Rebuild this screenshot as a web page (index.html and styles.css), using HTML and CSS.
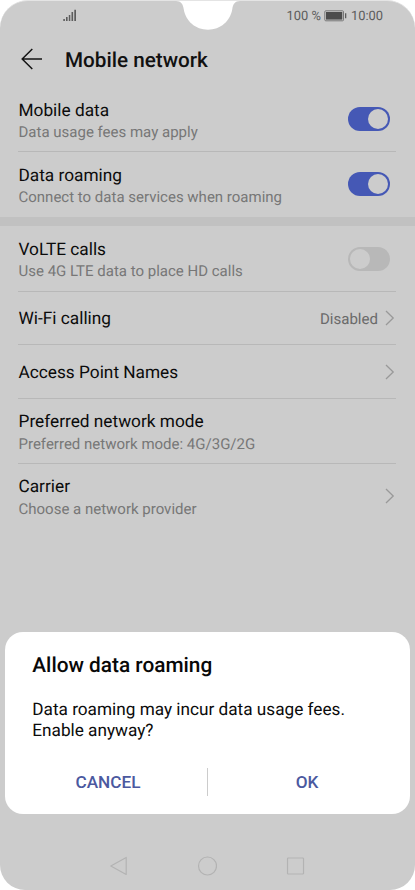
FILE: index.html
```html
<!DOCTYPE html>
<html lang="en">
<head>
<meta charset="utf-8">
<title>Mobile network</title>
<link rel="stylesheet" href="styles.css">
</head>
<body>
<main class="phone">
  <svg class="notch" width="72" height="31" viewBox="0 0 72 31"><path d="M4 0V1C9 1 11 4 11.700 9C13.500 21 23.500 29.700 36 29.700S58.500 21 60.300 9C61 4 63 1 68 1V0Z" fill="#fff"/></svg>
  <div class="status">
    <svg class="signal" width="14" height="13" viewBox="0 0 14 13" fill="#5c5c5c"><path d="M.3 10h1.600v2H.3zM3 8h1.600v4H3zM5.800 6h1.500v6H5.800zM8.500 3h1.600v9H8.500zM11.300.8H13V12h-1.700z"/></svg>
    <div class="power">
      <span class="percent">100 %</span>
      <svg class="battery" width="23" height="12" viewBox="0 0 23 12"><rect x=".8" y=".8" width="18.700" height="10" rx="1" fill="none" stroke="#777"/><rect x="2" y="2" width="16.300" height="7.600" fill="#4c4c4c"/><path d="M21 3.200h1.300v5H21z" fill="#5c5c5c"/></svg>
      <span class="clock">10:00</span>
    </div>
  </div>
  <header class="header">
    <svg class="back" width="23" height="24" viewBox="0 0 23 24" fill="none" stroke="#151515" stroke-width="1.500"><path d="M22 12H2M12.300 2 2.200 12l10.100 10"/></svg>
    <h1 class="heading">Mobile network</h1>
  </header>
  <section class="group first">
    <div class="row"><div class="label"><div class="title low">Mobile data</div><div class="sub">Data usage fees may apply</div></div><span class="toggle on"></span></div>
    <div class="row"><div class="label"><div class="title low">Data roaming</div><div class="sub">Connect to data services when roaming</div></div><span class="toggle on"></span></div>
  </section>
  <div class="band"></div>
  <section class="group">
    <div class="row volte"><div class="label"><div class="title low">VoLTE calls</div><div class="sub">Use 4G LTE data to place HD calls</div></div><span class="toggle"></span></div>
    <div class="row single"><div class="title name">Wi-Fi calling</div><div class="more"><span class="value">Disabled</span><svg class="chevron" width="10" height="16" viewBox="0 0 10 16"><path d="m1 1 7.200 7L1 15"/></svg></div></div>
    <div class="row single apn"><div class="title name">Access Point Names</div><svg class="chevron" width="10" height="16" viewBox="0 0 10 16"><path d="m1 1 7.200 7L1 15"/></svg></div>
    <div class="row"><div class="label"><div class="title">Preferred network mode</div><div class="sub">Preferred network mode: 4G/3G/2G</div></div></div>
    <div class="row carrier"><div class="label"><div class="title">Carrier</div><div class="sub">Choose a network provider</div></div><svg class="chevron" width="10" height="16" viewBox="0 0 10 16"><path d="m1 1 7.200 7L1 15"/></svg></div>
  </section>
  <section class="dialog">
    <h2 class="question">Allow data roaming</h2>
    <p class="message">Data roaming may incur data usage fees.<br>Enable anyway?</p>
    <div class="actions"><button class="action cancel">CANCEL</button><span class="split"></span><button class="action ok">OK</button></div>
  </section>
  <nav class="nav">
    <svg width="20" height="20" viewBox="0 0 20 20"><path d="M18.200 1.500v17L2.800 10z" stroke-linejoin="round"/></svg>
    <svg width="20" height="20" viewBox="0 0 20 20"><circle cx="10.500" cy="10" r="9"/></svg>
    <svg width="20" height="20" viewBox="0 0 20 20"><rect x="1.500" y="2" width="16" height="16" rx=".8"/></svg>
  </nav>
</main>
</body>
</html>
```
FILE: styles.css
```css
* { box-sizing: border-box; }
body { margin: 0; background: #fff; font-family: Roboto, "Liberation Sans", sans-serif; text-rendering: geometricPrecision; }
h1, h2, p { margin: 0; }
svg { display: block; flex: none; }
.phone { position: relative; width: 415px; height: 890px; background: #cccccc; border-top: 1px solid #e4e4e4; border-radius: 28px 28px 25px 25px; overflow: hidden; display: flex; flex-direction: column; }
.notch { position: absolute; left: 172px; top: -1px; }
.status { height: 30px; padding: 0 32px 0 63px; display: flex; justify-content: space-between; align-items: center; color: #5c5c5c; font-size: 12.9px; line-height: 16px; white-space: nowrap; }
.signal { margin-bottom: 1px; }
.power { display: flex; align-items: center; }
.percent, .clock { padding-top: 1px; }
.battery { margin: 0 4px 1px 3px; }
.header { height: 56px; padding-left: 20px; display: flex; align-items: center; }
.heading { margin-left: 22px; font-size: 20.7px; font-weight: 500; color: #111; line-height: 26px; padding-top: 4px; }
.group { padding: 0 19px 0 18px; }
.row { height: 65px; display: flex; justify-content: space-between; align-items: center; padding: 0 6px 0 .5px; border-bottom: 1px solid #b8b8b8; }
.row:last-child { border-bottom: 0; }
.first .row:last-child { padding-bottom: 2px; }
.label { padding-top: 3px; }
.first .row:last-child .label { padding-top: 5px; }
.volte { height: 66px; }
.title { font-size: 17.25px; line-height: 22px; color: #0b0b0b; white-space: nowrap; }
.low { margin: 1px 0 -1px; }
.name { padding-top: 2px; }
.sub { font-size: 15px; line-height: 22px; color: #777; white-space: nowrap; }
.single { height: 53px; padding-right: 1px; }
.apn { height: 54px; }
.carrier { padding-right: 1px; padding-bottom: 1px; }
.toggle { width: 42px; height: 24px; border-radius: 12px; background: #b8b8b8; padding: 2px; display: flex; }
.toggle::after { content: ""; width: 20px; height: 20px; border-radius: 50%; background: #cccccc; }
.toggle.on { background: #4558b5; justify-content: flex-end; }
.more { display: flex; align-items: center; gap: 7px; }
.value { font-size: 15.05px; color: #6a6a6a; padding-top: 1px; }
.chevron { fill: none; stroke: #999; stroke-width: 1.3; }
.band { height: 9px; background: #c1c1c1; }
.dialog { position: absolute; left: 5px; top: 631px; width: 405px; height: 182px; border-radius: 18px; background: #fff; padding: 21px 0 0 27.3px; }
.question { font-size: 20.8px; line-height: 26px; font-weight: 500; color: #080808; }
.message { margin-top: 21px; font-size: 17.2px; line-height: 20.5px; color: #0b0b0b; white-space: nowrap; }
.actions { margin: 27px 0 0 -27.3px; display: flex; align-items: center; height: 28px; }
.action { flex: 1; border: 0; background: none; padding: 0; font: 500 17.2px Roboto, sans-serif; color: #4b599f; }
.cancel { padding-left: 4px; }
.ok { padding-right: 4px; }
.split { width: 1px; height: 28px; background: #ccc; }
.nav { position: absolute; top: 855px; left: 108px; width: 198px; display: flex; justify-content: space-between; }
.nav svg { fill: none; stroke: #b3b3b3; stroke-width: 1.2; }
```
